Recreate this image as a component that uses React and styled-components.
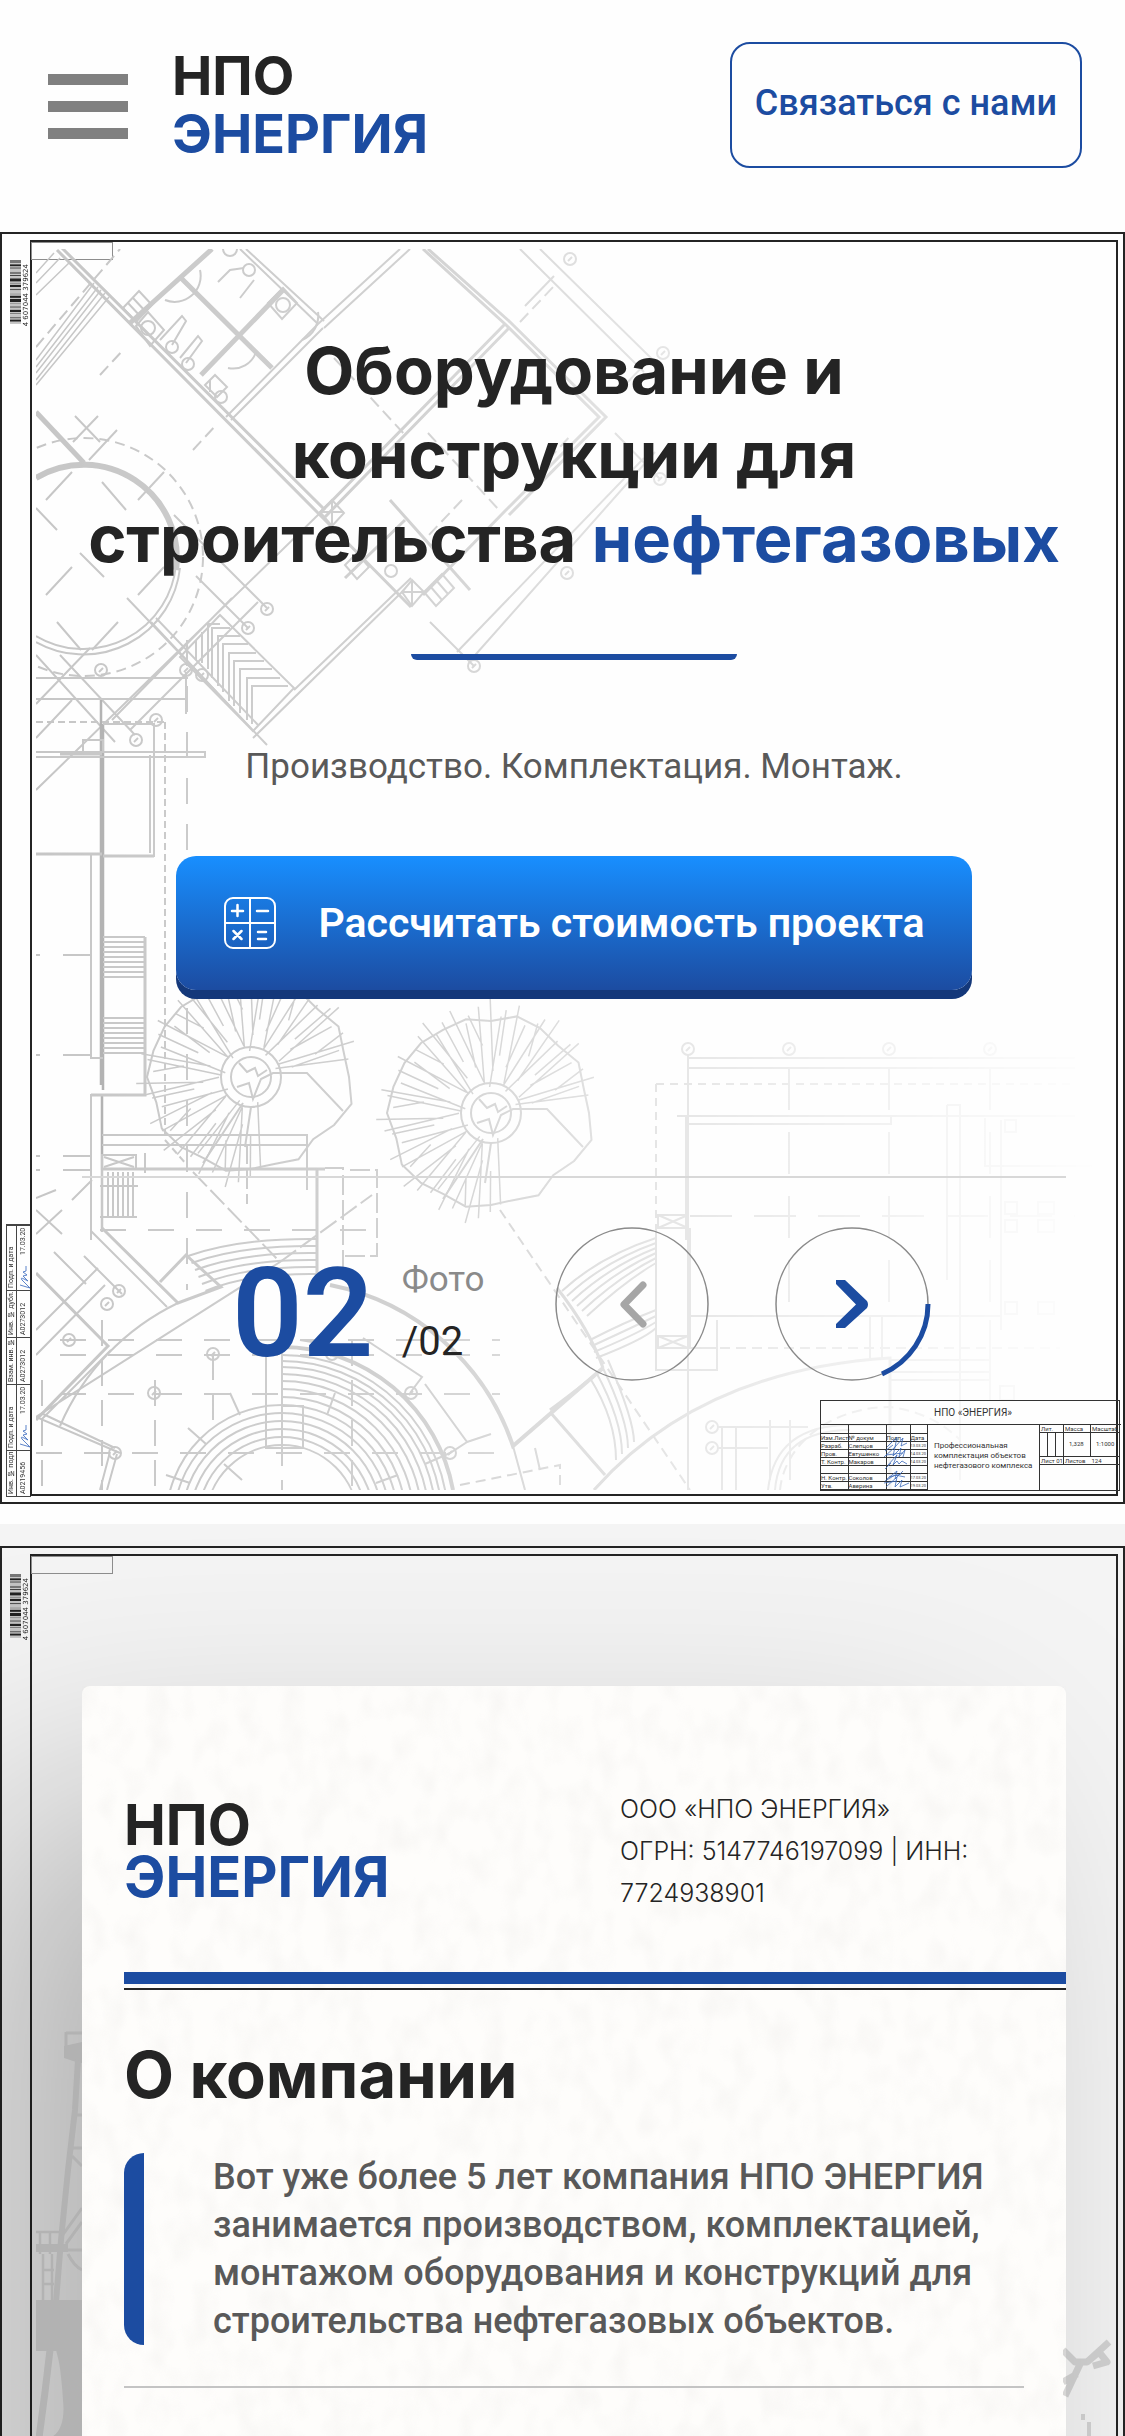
import React from "react";
import styled, { createGlobalStyle, css } from "styled-components";

const color = {
  blue: "#1c4ca1",
  ink: "#242424",
  text: "#595959",
  muted: "#8a8a8a",
  line: "#d8d8d8",
};

const bodyFont = css`
  font-family: Roboto, "Liberation Sans", sans-serif;
`;

const GlobalStyle = createGlobalStyle`
  *, *::before, *::after { box-sizing: border-box; }
  body {
    margin: 0;
    background: #fefefe;
    color: ${color.ink};
    font-family: Inter, "Liberation Sans", sans-serif;
  }
  h1, h2, p { margin: 0; }
  button { font: inherit; cursor: pointer; }
`;

const Page = styled.div`
  display: flex;
  flex-direction: column;
  min-height: 100vh;
`;

/* ---------- header ---------- */

const Header = styled.header`
  display: flex;
  align-items: center;
  padding: 42px 43px 64px 48px;
`;

const Burger = styled.button`
  display: flex;
  flex-direction: column;
  gap: 16px;
  width: 80px;
  padding: 2px 0 0;
  border: 0;
  background: none;
`;

const BurgerBar = styled.span`
  height: 11px;
  background: #808080;
`;

const Logo = styled.a`
  display: flex;
  flex-direction: column;
  color: ${color.ink};
  font-size: ${(p) => (p.$compact ? "56px" : "54px")};
  font-weight: 700;
  line-height: ${(p) => (p.$compact ? "52px" : "58px")};
  text-decoration: none;
`;

const Accent = styled.span`
  color: ${color.blue};
`;

const HeaderLogo = styled(Logo)`
  margin: 0 auto 0 44px;
`;

const ContactLink = styled.a`
  ${bodyFont}
  display: flex;
  align-items: center;
  height: 126px;
  padding: 0 23px 4px;
  border: 2px solid ${color.blue};
  border-radius: 20px;
  color: ${color.blue};
  font-size: 36px;
  font-weight: 500;
  text-decoration: none;
`;

/* ---------- drawing frame ---------- */

const OuterFrame = styled.div`
  position: relative;
  padding: 6px 5px ${(p) => (p.$open ? "0" : "6px")} 28px;
  border: 2px solid ${color.ink};
  ${(p) => p.$open && css`border-bottom: 0;`}
`;

const InnerFrame = styled.div`
  position: relative;
  border: 2px solid ${color.ink};
  ${(p) => p.$open && css`border-bottom: 0;`}
`;

const FrameTab = styled.div`
  position: absolute;
  top: 0;
  left: -1px;
  width: 82px;
  height: 18px;
  border: 1px solid #8d8d8d;
`;

const BarcodeBox = styled.div`
  position: absolute;
  top: 26px;
  left: 8px;
  display: flex;
  align-items: flex-start;
`;

const BarcodeDigits = styled.span`
  padding-bottom: 4px;
  font-family: "DejaVu Sans", sans-serif;
  font-size: 7px;
  line-height: 8px;
  writing-mode: vertical-rl;
  transform: rotate(180deg);
  white-space: pre;
`;

const BARS = [3, 1, 2, 1, 1, 3, 2, 1, 1, 2, 3, 1, 1, 1, 2, 2, 1, 3, 1, 1, 2, 1, 3, 1, 1, 2, 1, 2, 2, 1, 1, 3, 1, 1, 2, 2];

function Barcode() {
  let y = 0;
  const bars = BARS.map((size, i) => {
    const bar = i % 2 === 0 ? (
      <rect key={i} x="0" y={y} width="11" height={size} fill={i % 3 ? "#222" : "#777"} />
    ) : (
      <rect key={i} x="0" y={y} width="11" height={size} fill="#c4c4c4" />
    );
    y += size;
    return bar;
  });
  return (
    <BarcodeBox>
      <svg width="12" height="65" viewBox="0 0 12 60" preserveAspectRatio="none" aria-hidden="true">{bars}</svg>
      <BarcodeDigits>4 607044 379624</BarcodeDigits>
    </BarcodeBox>
  );
}

/* ---------- blueprint drawing ---------- */

const BlueprintSvg = styled.svg`
  position: absolute;
  top: 7px;
  left: 4px;
  width: 1066px;
  height: 1241px;
  max-width: calc(100% - 4px);
`;

function Tree({ cx, cy }) {
  const radii = [98, 104, 96, 88, 95, 90, 92, 97, 94, 99, 103, 98, 104, 101, 100, 99, 96, 97, 92, 100, 98, 95, 101, 96];
  const pt = (r, deg) => {
    const a = (deg * Math.PI) / 180;
    return `${(cx + r * Math.cos(a)).toFixed(1)},${(cy + r * Math.sin(a)).toFixed(1)}`;
  };
  const outline = radii.map((r, i) => pt(r, i * 15)).join(" ");
  const spokes = [];
  for (let i = 0; i < 50; i += 1) {
    const deg = 84 + i * 5.4 + ((i * 5) % 4);
    const far = 92 + ((i * 7) % 24);
    const near = [26, 58, 32, 48, 68, 30, 42][i % 7];
    const turn = ((i * 3) % 7) * 3 - 9;
    spokes.push(`M${pt(near, deg + turn)} L${pt(far, deg)}`);
  }
  return (
    <g>
      <circle cx={cx} cy={cy} r="30" />
      <circle cx={cx} cy={cy} r="20" />
      <polygon points={outline} />
      <path d={spokes.join(" ")} strokeWidth="1.5" />
      <path d={`M${cx - 12},${cy - 14} l8,9 8,-4 3,8 9,-6 M${cx - 14},${cy + 10} l12,-4 4,16 8,-20 12,-6 h34 l36,38 M${cx},${cy + 30} l-6,40 M${cx - 8},${cy + 26} l-40,60`} />
    </g>
  );
}

function Steps({ x, y, width, count, gap }) {
  const d = Array.from({ length: count }, (_, i) => `M${x} ${y + i * gap} h${width}`).join(" ");
  return <path d={d} />;
}

function Marker({ x, y }) {
  return (
    <g>
      <circle cx={x} cy={y} r="6" />
      <path d={`M${x - 2} ${y + 2} l4 -4`} />
    </g>
  );
}

function Blueprint() {
  const markers = [
    [570, 259], [663, 353], [660, 479], [567, 573], [474, 666], [267, 609], [248, 628],
    [101, 670], [186, 670], [202, 675], [156, 720], [136, 740], [688, 1049], [789, 1049],
    [889, 1049], [990, 1049], [119, 1291], [107, 1304], [69, 1340], [213, 1354], [154, 1393],
    [411, 1393], [450, 1453], [712, 1427], [712, 1448], [332, 1354], [115, 1453],
  ];
  const innerArcs = [76, 84, 92, 100, 108, 116];
  const outerArcs = [124, 132, 140, 147, 154, 160, 166];
  return (
    <BlueprintSvg viewBox="36 249 1066 1241" preserveAspectRatio="xMinYMin slice" aria-hidden="true">
      <defs>
        <linearGradient id="fade" x1="0" x2="1" y1="0" y2="0">
          <stop offset="0" stopColor="#fff" />
          <stop offset="0.35" stopColor="#fff" stopOpacity="0.8" />
          <stop offset="0.6" stopColor="#fff" stopOpacity="0.42" />
          <stop offset="1" stopColor="#fff" stopOpacity="0" />
        </linearGradient>
        <mask id="fadeMask" maskUnits="userSpaceOnUse" x="36" y="249" width="1066" height="1241">
          <rect x="36" y="249" width="1066" height="1241" fill="url(#fade)" />
        </mask>
      </defs>
      <g mask="url(#fadeMask)" fill="none" stroke="#c6c6c6" strokeWidth="2">
        {/* round hall */}
        <path d="M36 478 A93 93 0 0 1 176 570" strokeWidth="6" />
        <path d="M176 565 A93 93 0 0 1 36 636 M180 568 A97 97 0 0 1 36 642" strokeWidth="2" />
        <circle cx="84" cy="557" r="119" strokeDasharray="10 6" />
        <path d="M36 412 L84 463" strokeWidth="5" />
        <path d="M75 416 l25 26 M98 416 l-25 26 M117 430 l-28 30 M46 500 l26 -28 M102 482 l24 28 M138 500 l26 -28 M36 508 l21 22 M80 553 l24 24 M46 595 l26 -28 M138 595 l26 -28 M57 622 l24 28 M92 650 l26 -28" />
        <path d="M127 598 L267 745 M174 515 L267 608 M196 576 L248 628 M320 513 L36 790 M232 598 L112 720 M258 602 L130 730 M36 655 L115 742 M90 648 L36 704 M36 738 L72 700 M60 655 L135 735" />

        {/* upper block walls */}
        <path d="M57 250 L320 515 L411 607 M62 248 L325 510" strokeWidth="3" />
        <path d="M212 249 L130 323 M180 277 L272 368 M283 290 L201 375" strokeWidth="5" />
        <path d="M240 249 L318 324 M246 249 L324 321 M318 324 L400 249 M324 328 L410 249 M318 324 L226 417 M323 328 L231 420" />
        <path d="M423 249 L505 324 L599 417 L505 511 L423 595 M428 249 L509 321 L606 417 L509 515" strokeWidth="3" />
        <path d="M505 324 L320 513 M509 328 L325 517 M390 500 L470 590 M405 520 L345 578" strokeWidth="3" />
        <path d="M520 249 L644 372 M540 249 L651 358 L618 392 M525 306 L554 276 M644 458 L457 652 M655 452 L469 662 M615 433 L660 479 M430 622 L474 666 M411 578 L294 690 M404 590 L253 738" />
        <path d="M36 385 L109 297 M36 380 L105 293 M36 373 L101 290 M36 367 L98 287 M36 360 L94 283 M36 295 L70 262 M36 283 L60 258 M36 273 L54 253" strokeWidth="1.5" />
        <path d="M36 347 L120 249 M100 375 l24 -26 M193 450 l24 -26 M334 358 l72 78 M428 433 l72 78 M462 500 l-34 36 M548 460 l24 -26 M520 322 l34 -36" strokeDasharray="12 6" />
        <path d="M165 300 A26 26 0 0 0 200 270 M228 368 A24 24 0 0 0 256 352 M318 312 A26 26 0 0 1 302 340" />
        <g>
          <circle cx="148" cy="328" r="7" /><circle cx="172" cy="347" r="6" /><circle cx="188" cy="364" r="6" /><circle cx="221" cy="397" r="6" />
          <circle cx="249" cy="270" r="6" /><circle cx="283" cy="305" r="7" /><circle cx="391" cy="571" r="6" /><circle cx="230" cy="249" r="7" />
          <path d="M136 326 l12 -14 16 18 -14 16 z M268 303 l15 -15 14 15 -15 16 z M160 340 l22 -24 4 5 -14 24 M180 358 l18 -22 4 5 -16 22 M240 298 l14 -18 M218 282 l12 -12 14 -2 M205 385 l10 -10 12 12 -10 10 z M210 380 v12" />
          <path d="M123 308 l16 -17 13 14 -16 17 z M128 303 l13 14 M133 298 l13 14 M424 592 l18 -18 12 14 -18 18 z M430 586 l12 14 M436 580 l12 14 M345 565 l12 -12 12 14 -12 12 z M402 592 l10 -12 12 12 -12 14 z M402 592 h22 M412 580 v26 M320 512 l12 -12 12 13 -12 13 z M320 512 h24 M332 500 v26" />
        </g>

        {/* herringbone stairs */}
        <path d="M220 615 L294 688 L253 731 L180 657 Z M151 622 L253 731 M156 618 L258 725" />
        <path d="M220 624 h-12 v45 M230 628 h-18 v50 M240 636 h-22 v50 M248 644 h-25 v48 M256 653 h-27 v48 M264 661 h-30 v45 M272 669 h-32 v44 M280 678 h-33 v42 M288 686 h-36 v38 M202 632 v31 M196 640 v20" />

        {/* left building */}
        <path d="M36 678 h152 M36 699 h152 M186 672 v42" />
        <path d="M101 700 V1085 M102 1095 V1170 M103 724 V1090" strokeWidth="2.5" stroke="#b0b0b0" />
        <path d="M36 722 H165" strokeDasharray="7 4" />
        <path d="M165 722 V1140 L187 1165" strokeDasharray="7 4" />
        <path d="M187 640 V1290" strokeDasharray="26 20" />
        <path d="M103 724 h51 v132 h-51 M150 755 v98 M83 740 h20 v12 h-20 z M36 752 h169 v5 H36" />
        <path d="M36 854 h66 M60 754 h42 M103 856 h51" strokeWidth="3" />
        <path d="M91 855 V1058 h12 M91 1094 V1240 M36 955 h4 M63 955 h28 M36 1055 h4 M63 1055 h28 M36 1156 h4 M63 1156 h28 M36 1170 h4 M63 1170 h28" />
        <path d="M145 937 V1095 H91" strokeWidth="3" />
        <Steps x={103} y={937} width={42} count={9} gap={5} />
        <Steps x={103} y={1018} width={42} count={8} gap={5} />
        <path d="M102 1135 H307 V1190 M102 1145 H307 M102 1155 h34 v14 h-34 z M104 1157 l30 10 M134 1157 l-30 10 M145 1153 v20" />
        <path d="M102 1169 H325 M317 1169 V1285" strokeWidth="3" />
        <path d="M325 1168 h18 V1280 M350 1170 h27 V1256 H340 M247 1144 v60 M193 1172 L280 1262 L372 1195" strokeDasharray="20 5" />
        <Tree cx={251} cy={1077} />
        <Tree cx={491} cy={1113} />

        {/* lower left */}
        <path d="M102 1170 V1232" strokeWidth="2.5" />
        <path d="M108 1172 v45 M113 1172 v45 M118 1172 v45 M123 1172 v45 M128 1172 v45 M133 1172 v45 M100 1186 h38 M100 1217 h37" />
        <path d="M102 1228 L178 1303 L221 1287 L186 1255 L160 1282 M36 1273 L108 1346 L36 1420" strokeWidth="3" />
        <path d="M91 1231 L167 1307 M111 1350 L41 1420 M36 1355 L105 1285 M36 1330 L98 1268 M84 1256 l38 38 M54 1252 l32 32 M36 1210 l26 24 M62 1210 l-26 24 M36 1198 l20 -8 M72 1200 l20 -20 M36 1417 L120 1453 M41 1413 L115 1448 M100 1490 L110 1452 M107 1490 L117 1454 M36 1417 L280 1262" />
        <path d="M100 1230 H380 M60 1340 H500 M60 1355 H500 M60 1394 H500 M36 1453 H500" strokeDasharray="26 22" />
        <path d="M102 1320 V1490 M155 1380 V1490 M213 1354 V1430 M352 1340 V1490 M42 1380 V1490 M282 1280 V1500" strokeDasharray="26 14" />
        {[0, 7, 14, 21, 28, 35].map((r) => (
          <path key={r} d={`M${188 + r / 2} ${1256 + r} Q ${240 + r / 4} ${1238 + r} 317 ${1239 + r}`} />
        ))}
        <path d="M60 1426 A243 243 0 0 1 178 1303" />
        <path d="M330 1285 A243 243 0 0 1 513 1446 L603 1368" strokeWidth="4" />
        <path d="M282 1347 A174 174 0 0 1 453 1490" strokeWidth="4" />
        {innerArcs.map((r) => <circle key={r} cx="282" cy="1521" r={r} />)}
        {outerArcs.map((r) => <path key={r} d={`M282 ${1521 - r} A${r} ${r} 0 0 1 ${282 + r} 1521`} />)}
        <path d="M266 1350 v98 h37 v-42 h-22 M282 1350 v98" strokeWidth="2" />
        <path d="M363 1338 L422 1377 L410 1393 M425 1384 L467 1442 L450 1453 L425 1464 M467 1442 l24 -8 M300 1340 l60 10 M230 1393 l10 22 M335 1393 l-8 22 M188 1428 l18 16 M166 1475 l24 8 M398 1475 l-22 8 M224 1464 l18 16 M513 1446 L525 1490 M535 1448 l5 22" />

        {/* lower right building */}
        <path d="M688 1055 V1490 M688 1058 H1075 M688 1068 H1075 M677 1116 H1075 M688 1124 H891 v-7 M686 1116 V1240" />
        <path d="M656 1084 H1070 M656 1084 V1250" strokeDasharray="8 6" />
        <path d="M789 1068 V1310 M889 1068 V1310 M990 1068 V1310 M690 1216 H1075" strokeDasharray="42 22" />
        <path d="M947 1105 h13 V1480 M947 1105 V1280 M985 1118 v48 h90 M1001 1120 V1330 M985 1166 H1100 M1005 1120 h11 v12 h-11 z" />
        <path d="M658 1215 h30 v13 h-30 z l30 13 M688 1215 l-30 13 M656 1228 V1370 H717 V1320 M690 1228 V1348 M658 1336 h30 v12 h-30 z l30 12 M688 1336 l-30 12 M690 1316 H1000 M690 1348 H717" strokeWidth="2" />
        <path d="M1005 1202 h12 v12 h-12 z M1005 1220 h12 v12 h-12 z M1005 1302 h12 v12 h-12 z M1038 1202 h16 v12 h-16 z M1038 1220 h16 v12 h-16 z M1038 1302 h16 v12 h-16 z M990 1320 V1400 M870 1316 V1358 M882 1316 V1358 M1000 1386 h14 v14 h-14 z" />
        {[0, 5, 10, 15, 20, 25].map((o) => (
          <path key={o} d={`M${562 + o} ${1291 + o} Q ${600 + o} ${1256 + o} 656 ${1238 + o}`} />
        ))}
        {[0, 6, 12, 18].map((o) => (
          <path key={o} d={`M${590 + o / 3} ${1340 + o} Q ${625 + o} ${1322 + o} 656 ${1310 + o} M${590 + o} ${1378 - o} Q ${616 + o} 1420 ${616 + o} ${1460 - o}`} />
        ))}
        <path d="M557 1288 Q590 1330 603 1368 M550 1410 Q590 1380 603 1368 M550 1412 L605 1475 M594 1490 Q700 1370 890 1358 V1490" strokeWidth="3" />
        <path d="M500 1210 L690 1490 M780 1490 A110 90 0 0 1 890 1407 A110 90 0 0 1 960 1440 M656 1348 H1060 M460 1485 L560 1465 V1490" strokeDasharray="10 6" />
        <path d="M768 1490 Q775 1425 850 1425 H900 M775 1490 Q780 1430 850 1430 M718 1427 h90 M718 1448 h50 M722 1427 V1490 M736 1427 V1490 M770 1420 V1480 M790 1420 V1480 M890 1360 H990 M890 1372 H990 M890 1380 H990" />
        {markers.map(([x, y]) => <Marker key={`${x}-${y}`} x={x} y={y} />)}
      </g>
    </BlueprintSvg>
  );
}

/* ---------- hero ---------- */

const HeroBody = styled.div`
  position: relative;
  display: flex;
  flex-direction: column;
  align-items: center;
  padding: 87px 50px 113px;
`;

const HeroTitle = styled.h1`
  margin: 0 -20px;
  font-size: 65px;
  font-weight: 700;
  line-height: 84px;
  text-align: center;
`;

const TitleRule = styled.div`
  width: 326px;
  height: 6px;
  margin-top: 73px;
  border-radius: 0 0 6px 6px;
  background: ${color.blue};
`;

const Subtitle = styled.p`
  ${bodyFont}
  margin-top: 83px;
  color: ${color.text};
  font-size: 35px;
  line-height: 48px;
`;

const CalcButton = styled.button`
  ${bodyFont}
  display: flex;
  align-items: center;
  gap: 41px;
  height: 134px;
  margin-top: 65px;
  padding: 0 47px;
  border: 0;
  border-radius: 20px;
  background: linear-gradient(#188fff, ${color.blue});
  box-shadow: 0 9px 0 #14387a;
  color: #fff;
  font-size: 41px;
  font-weight: 600;
`;

const Divider = styled.hr`
  align-self: stretch;
  height: 2px;
  margin: ${(p) => p.$top}px 0 0;
  border: 0;
  background: ${(p) => p.$color || color.line};
`;

const Slider = styled.div`
  display: flex;
  align-items: center;
  align-self: stretch;
  height: 154px;
  margin-top: 49px;
  padding-left: 150px;
`;

const Counter = styled.div`
  ${bodyFont}
  display: flex;
  align-items: center;
  gap: 28px;
  width: 323px;
  padding-top: 20px;
`;

const CounterCurrent = styled.span`
  color: ${color.blue};
  font-size: 124px;
  font-weight: 600;
  line-height: 154px;
`;

const CounterInfo = styled.span`
  display: flex;
  flex-direction: column;
  color: ${color.ink};
  font-size: 40px;
  line-height: 68px;
`;

const CounterLabel = styled.span`
  color: ${color.muted};
  font-size: 35px;
  line-height: 56px;
`;

const RoundButton = styled.button`
  width: 154px;
  height: 154px;
  margin-right: 66px;
  padding: 0;
  border: 0;
  background: none;
`;

/* ---------- title block ---------- */

const drafting = css`
  color: #333;
  font-family: Roboto, "Liberation Sans", sans-serif;
  font-size: 6px;
  line-height: 7px;
  white-space: nowrap;
`;

const Stamp = styled.div`
  ${drafting}
  position: absolute;
  right: -4px;
  bottom: 3px;
  display: grid;
  grid-template-columns: 106px 113px 81px;
  grid-template-rows: 24px 65px;
  width: 300px;
  border: 1px solid #333;
`;

const StampTitle = styled.div`
  grid-column: 1 / -1;
  padding-left: 113px;
  border-bottom: 1px solid #333;
  font-size: 10px;
  line-height: 24px;
`;

const StampTable = styled.table`
  width: 106px;
  border-collapse: collapse;
  table-layout: fixed;
`;

const StampCol = styled.col`
  width: ${(p) => p.$width}px;
`;

const StampCell = styled.td`
  height: 8px;
  padding: 0;
  border: 1px solid #333;
  border-width: 0 1px 1px 0;
  font-size: ${(p) => (p.$small ? "4px" : "6px")};
  line-height: 7px;
`;

const StampSubject = styled.div`
  padding: 16px 0 0 7px;
  border-right: 1px solid #333;
  font-size: 8px;
  line-height: 10px;
`;

const StampMeta = styled.div`
  display: grid;
  grid-template-columns: 8px 8px 8px 27px 29px;
  grid-template-rows: 8px 24px 8px;
`;

const MetaCell = styled.span`
  grid-column: span ${(p) => p.$span || 1};
  padding-left: ${(p) => (p.$middle ? "5px" : "1px")};
  border: 1px solid #333;
  border-width: 0 1px 1px 0;
  line-height: ${(p) => (p.$middle ? "22px" : "7px")};
`;

const Signatures = styled.svg`
  position: absolute;
  left: 62px;
  top: 32px;
`;

const stampRows = [
  ["", "", "", ""],
  ["Изм.Лист", "№ докум", "Подп.", "Дата"],
  ["Разраб.", "Слепцов", "", "13.03.20"],
  ["Пров.", "Евтушенко", "", "14.03.20"],
  ["Т. Контр.", "Макаров", "", "14.03.20"],
  ["", "", "", ""],
  ["Н. Контр.", "Соколов", "", "17.03.20"],
  ["Утв.", "Аверина", "", "19.03.20"],
];

function TitleBlock() {
  return (
    <Stamp>
      <StampTitle>НПО «ЭНЕРГИЯ»</StampTitle>
      <StampTable>
        <colgroup>
          <StampCol $width={27} /><StampCol $width={38} /><StampCol $width={24} /><StampCol $width={17} />
        </colgroup>
        <tbody>
          {stampRows.map((row, r) => (
            <tr key={r}>
              {row.map((cell, c) => <StampCell key={c} $small={c === 3 && r > 1}>{cell}</StampCell>)}
            </tr>
          ))}
        </tbody>
      </StampTable>
      <StampSubject>
        Профессиональная<br />комплектация объектов<br />нефтегазового комплекса
      </StampSubject>
      <StampMeta>
        <MetaCell $span={3}>Лит.</MetaCell><MetaCell>Масса</MetaCell><MetaCell>Масштаб</MetaCell>
        <MetaCell /><MetaCell /><MetaCell /><MetaCell $middle>1,328</MetaCell><MetaCell $middle>1:1000</MetaCell>
        <MetaCell $span={3}>Лист 01</MetaCell><MetaCell $span={2}>Листов &nbsp;&nbsp; 124</MetaCell>
      </StampMeta>
      <Signatures width="28" height="56" viewBox="0 0 28 56" aria-hidden="true">
        <g fill="none" stroke="#3b68b8" strokeWidth="0.8">
          <path d="M4 14 L14 4 L12 14 L20 5 L18 13 L24 10 M2 18 L10 12" />
          <path d="M1 24 L12 14 L10 23 L18 15 L16 24 L22 17 L20 24 M3 22 L20 20" />
          <path d="M5 32 L14 22 L10 32 L14 28 L16 31 L19 28 L24 31 M2 36 L8 30" />
          <path d="M4 46 L14 38 L12 46 L20 38 M2 48 L12 42 L22 44 M6 44 L18 41" />
          <path d="M3 54 L14 44 L12 54 L19 47 L17 54 L26 50 M1 50 L14 48" />
        </g>
      </Signatures>
    </Stamp>
  );
}

const SideStrip = styled.div`
  ${drafting}
  position: absolute;
  left: 4px;
  bottom: 5px;
  display: grid;
  grid-template-columns: 46px 66px 47px 47px 65px;
  grid-template-rows: 10px 14px;
  border: 1px solid #444;
  border-width: 1px 0 1px 1px;
  font-size: 7px;
  line-height: 9px;
  writing-mode: vertical-rl;
  transform: rotate(180deg);
`;

const StripCell = styled.span`
  padding: 2px 0;
  border: 1px solid #444;
  border-width: 0 1px 1px 0;
  line-height: ${(p) => (p.$value ? "13px" : "9px")};
  text-align: ${(p) => (p.$end ? "end" : "start")};
`;

const StripSignature = styled.svg`
  position: absolute;
  left: 17px;
  bottom: ${(p) => p.$bottom}px;
`;

function SideTable() {
  return (
    <>
      <SideStrip>
        <StripCell>Инв. № подл.</StripCell>
        <StripCell>Подп. и дата</StripCell>
        <StripCell>Взам. инв. №</StripCell>
        <StripCell>Инв. № дубл.</StripCell>
        <StripCell>Подп. и дата</StripCell>
        <StripCell $value>A0219456</StripCell>
        <StripCell $value $end>17.03.20</StripCell>
        <StripCell $value>A0273012</StripCell>
        <StripCell $value>A0273012</StripCell>
        <StripCell $value $end>17.03.20</StripCell>
      </SideStrip>
      {[54, 213].map((bottom) => (
        <StripSignature key={bottom} $bottom={bottom} width="12" height="24" viewBox="0 0 12 24" aria-hidden="true">
          <path d="M1 20 L11 23 L3 15 Q1 12 5 14 L9 16 L4 11 L8 10 L4 7 L7 6 V1" fill="none" stroke="#4a76c4" strokeWidth="0.9" />
        </StripSignature>
      ))}
    </>
  );
}

/* ---------- about ---------- */

const About = styled.section`
  position: relative;
  flex: 1 0 auto;
  margin-top: 20px;
  padding-top: 22px;
  overflow: hidden;
  background: #f4f4f4;
`;

const AboutBody = styled.div`
  padding: 130px 50px 0;
`;

const Card = styled.article`
  position: relative;
  margin-bottom: -400px;
  padding: 102px 0 448px 42px;
  border-radius: 8px;
  background: #fefdfb;
  box-shadow: -100px 120px 300px rgba(0, 0, 0, 0.28);
`;

const Paper = styled.svg`
  position: absolute;
  inset: 0;
  width: 100%;
  height: 100%;
`;

const CardContent = styled.div`
  position: relative;
`;

const CardHead = styled.div`
  display: grid;
  grid-template-columns: 496px 1fr;
  align-items: center;
  padding-right: 42px;
`;

const Requisites = styled.p`
  font-size: 25px;
  font-weight: 300;
  line-height: 42px;
`;

const HeadRule = styled.div`
  height: 18px;
  margin-top: 58px;
  border-top: 12px solid ${color.blue};
  border-bottom: 2px solid ${color.ink};
`;

const CardTitle = styled.h2`
  margin-top: 43px;
  font-size: 65px;
  font-weight: 700;
  line-height: 84px;
`;

const Quote = styled.p`
  ${bodyFont}
  display: flex;
  gap: 69px;
  margin: 36px 42px 0 0;
  color: ${color.text};
  font-size: 36px;
  font-weight: 500;
  line-height: 48px;

  &::before {
    content: "";
    flex: 0 0 20px;
    border-radius: 20px 0 0 20px;
    background: ${color.blue};
  }
`;

const CardFoot = styled.div`
  display: flex;
  padding-right: 42px;

  hr { flex: 1; }
`;

const Silhouette = styled.svg`
  position: absolute;
  top: 470px;
  ${(p) => (p.$right ? "right: 3px;" : "left: 4px;")}
`;

function CraneLeft() {
  return (
    <Silhouette width="46" height="412" viewBox="36 2026 46 412" aria-hidden="true">
      <g opacity="0.85" fill="#b0b0b0" stroke="#b0b0b0">
        <path d="M64 2046 L82 2042 V2063 L76 2062 L64 2058 Z" stroke="none" />
        <path d="M66 2032 V2048 M66 2033 H82" fill="none" strokeWidth="3" />
        <path d="M78 2060 L75 2110 L68 2170 L61 2240 L56 2302" fill="none" strokeWidth="6" />
        <path d="M72 2115 h10 M68 2148 h14 M72 2156 L82 2166 M62 2236 L82 2208 M66 2244 L82 2222 M66 2250 H82 M68 2254 Q74 2266 82 2270" fill="none" strokeWidth="3" />
        <path d="M36 2232 H60 M40 2232 V2254 M50 2232 V2254 M43 2254 V2300 M52 2254 V2300 M42 2270 h12 M42 2284 h12" fill="none" strokeWidth="2.5" />
        <rect x="36" y="2244" width="32" height="8" stroke="none" />
        <rect x="36" y="2300" width="46" height="51" stroke="none" />
        <path d="M50 2350 L45 2392 L39 2438" fill="none" strokeWidth="7" />
        <path d="M56 2350 H82 V2438 H50 Q66 2430 63 2400 Q61 2370 58 2358 Z" stroke="none" />
      </g>
    </Silhouette>
  );
}

function CraneRight() {
  return (
    <Silhouette $right width="50" height="412" viewBox="1066 2026 50 412" aria-hidden="true">
      <g opacity="0.3" fill="none" stroke="#808080" strokeWidth="7" strokeLinejoin="round">
        <path d="M1066 2350 L1078 2362 H1090 L1112 2342 M1084 2362 L1068 2396 M1090 2362 L1102 2352 L1110 2362 L1096 2366 M1066 2382 L1080 2374" />
        <path d="M1092 2422 V2438 M1086 2414 v6" strokeWidth="4" />
      </g>
    </Silhouette>
  );
}

export default function App() {
  return (
    <Page>
      <GlobalStyle />
      <Header>
        <Burger aria-label="Меню"><BurgerBar /><BurgerBar /><BurgerBar /></Burger>
        <HeaderLogo href="#top"><span>НПО</span><Accent>ЭНЕРГИЯ</Accent></HeaderLogo>
        <ContactLink href="#contact">Связаться с нами</ContactLink>
      </Header>

      <OuterFrame as="section">
        <Barcode />
        <SideTable />
        <InnerFrame>
          <FrameTab />
          <Blueprint />
          <HeroBody>
            <HeroTitle>
              Оборудование и<br />конструкции для<br />строительства <Accent>нефтегазовых</Accent>
            </HeroTitle>
            <TitleRule />
            <Subtitle>Производство. Комплектация. Монтаж.</Subtitle>
            <CalcButton>
              <svg width="54" height="54" viewBox="0 0 54 54" fill="none" stroke="#fff" strokeWidth="2" strokeLinecap="round" aria-hidden="true">
                <rect x="2" y="2" width="50" height="50" rx="8" />
                <path d="M27 2 V52 M2 27 H52" />
                <path d="M9 15 H20 M14.500 9 V20 M34 15 H45 M10.500 35 L18.500 43 M18.500 35 L10.500 43 M35 36 H43 M35 43 H43" strokeWidth="2.500" />
              </svg>
              Рассчитать стоимость проекта
            </CalcButton>
            <Divider $top={186} />
            <Slider>
              <Counter>
                <CounterCurrent>02</CounterCurrent>
                <CounterInfo><CounterLabel>Фото</CounterLabel>/02</CounterInfo>
              </Counter>
              <RoundButton aria-label="Назад">
                <svg width="154" height="154" viewBox="0 0 154 154" fill="none" aria-hidden="true">
                  <circle cx="77" cy="77" r="76" stroke="#8a8a8a" strokeWidth="1.500" />
                  <path d="M88 58 L69 77.500 L88 97" stroke="#a6a6a6" strokeWidth="7" strokeLinecap="round" strokeLinejoin="round" />
                </svg>
              </RoundButton>
              <RoundButton aria-label="Вперёд">
                <svg width="154" height="154" viewBox="0 0 154 154" fill="none" overflow="visible" aria-hidden="true">
                  <circle cx="77" cy="77" r="76" stroke="#8a8a8a" strokeWidth="1.500" />
                  <path d="M153 77 A76 76 0 0 1 107 147" stroke={color.blue} strokeWidth="5" />
                  <path d="M61 53 H70 L92 74 Q94 77.500 92 81 L70 101 H61 V97 L81 77.500 L61 57 Z" fill={color.blue} />
                </svg>
              </RoundButton>
            </Slider>
          </HeroBody>
          <TitleBlock />
        </InnerFrame>
      </OuterFrame>

      <About>
        <OuterFrame $open>
          <Barcode />
          <InnerFrame $open>
            <FrameTab />
            <AboutBody>
              <Card>
                <Paper aria-hidden="true">
                  <filter id="paper" x="0" y="0" width="100%" height="100%">
                    <feTurbulence type="fractalNoise" baseFrequency="0.045 0.03" numOctaves="2" seed="4" />
                    <feColorMatrix values="0 0 0 0 0.6  0 0 0 0 0.59  0 0 0 0 0.57  0.9 0 0 0 -0.38" />
                  </filter>
                  <rect width="100%" height="100%" filter="url(#paper)" opacity="0.28" />
                </Paper>
                <CardContent>
                  <CardHead>
                    <Logo $compact href="#top"><span>НПО</span><Accent>ЭНЕРГИЯ</Accent></Logo>
                    <Requisites>ООО «НПО ЭНЕРГИЯ»<br />ОГРН: 5147746197099 | ИНН: 7724938901</Requisites>
                  </CardHead>
                  <HeadRule />
                  <CardTitle>О компании</CardTitle>
                  <Quote>
                    Вот уже более 5 лет компания НПО ЭНЕРГИЯ занимается производством, комплектацией, монтажом оборудования и конструкций для строительства нефтегазовых объектов.
                  </Quote>
                  <CardFoot><Divider $top={41} $color="#c4c4c4" /></CardFoot>
                </CardContent>
              </Card>
            </AboutBody>
            <CraneLeft />
            <CraneRight />
          </InnerFrame>
        </OuterFrame>
      </About>
    </Page>
  );
}
